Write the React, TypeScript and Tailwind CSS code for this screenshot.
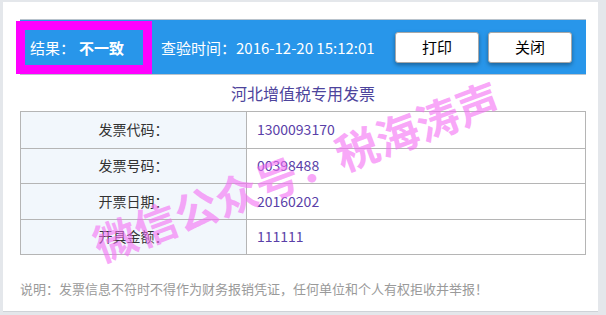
import React from "react";

const rows = [
  ["发票代码：", "1300093170"],
  ["发票号码：", "00398488"],
  ["开票日期：", "20160202"],
  ["开具金额：", "111111"],
];

export default function App() {
  return (
    <div
      className="w-[606px] h-[315px] bg-[#e4e7eb] overflow-hidden relative"
      style={{ fontFamily: '"Noto Sans CJK SC", "Microsoft YaHei", sans-serif' }}
    >
      <div className="ml-[3px] mt-[2px] w-[595px] h-[310px] bg-white border-b border-[#cfd3d8] pl-[17px] pr-[12px] pt-[17px]">
        {/* blue bar */}
        <div className="relative h-[56px] bg-[#2896ea] border-y border-[#b9c3cc] flex items-center">
          <div className="ml-[10px] w-[131px] text-white text-[15px] leading-none">
            结果：<span className="font-bold ml-[4px]">不一致</span>
          </div>
          <div className="text-white text-[15px] leading-none">查验时间：2016-12-20 15:12:01</div>
          <div className="ml-auto mr-[14px] flex gap-[9px]">
            <button className="w-[84px] h-[31px] bg-white border border-[#a8a8a8] rounded-[3px] shadow-[0_2px_4px_rgba(0,0,0,0.35)] text-[15px] text-black">
              打印
            </button>
            <button className="w-[84px] h-[31px] bg-white border border-[#a8a8a8] rounded-[3px] shadow-[0_2px_4px_rgba(0,0,0,0.35)] text-[15px] text-black">
              关闭
            </button>
          </div>
          <div className="absolute left-[-4px] top-[1px] w-[136px] h-[53px] border-[9px] border-[#ff00ff]" />
        </div>

        {/* title */}
        <div className="h-[36px] flex items-center justify-center text-[16px] text-[#4d449c]">
          河北增值税专用发票
        </div>

        {/* table */}
        <div className="border border-[#b5b5b5]">
          {rows.map(([k, v], i) => (
            <div
              key={k}
              className={`flex h-[35.5px] ${i > 0 ? "border-t border-[#b5b5b5]" : ""}`}
            >
              <div className="w-[226px] bg-[#f2f7fc] border-r border-[#b5b5b5] flex items-center justify-center text-[14px] text-[#333]">
                {k}
              </div>
              <div className="flex-1 flex items-center pl-[10px] text-[14px] text-[#5a3fa8]">{v}</div>
            </div>
          ))}
        </div>

        {/* note */}
        <div className="mt-[24px] text-[13px] text-[#9a9a9a]">
          说明：发票信息不符时不得作为财务报销凭证，任何单位和个人有权拒收并举报！
        </div>
      </div>

      {/* watermark */}
      <div
        className="absolute left-[296px] top-[170px] whitespace-nowrap font-bold text-[43px] leading-none text-[rgba(244,110,244,0.6)] pointer-events-none"
        style={{ transform: "translate(-50%, -50%) rotate(-20.5deg)" }}
      >
        微信公众号．税海涛声
      </div>
    </div>
  );
}
